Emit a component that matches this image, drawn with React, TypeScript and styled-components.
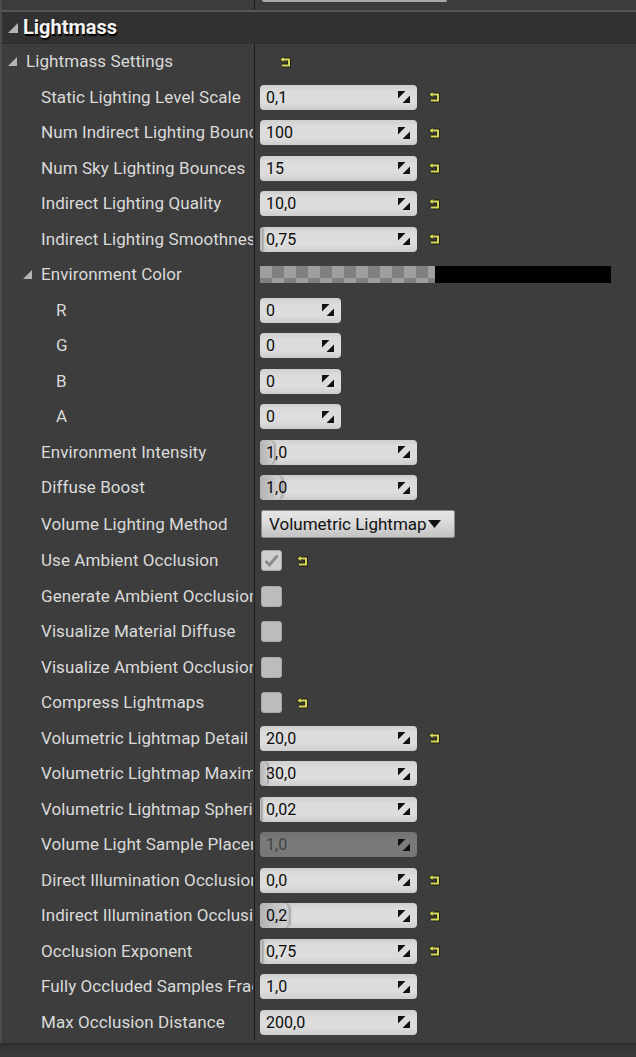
import React from 'react';
import styled, { createGlobalStyle } from 'styled-components';

const Global = createGlobalStyle`
  html, body { margin: 0; padding: 0; background: #3d3d3d; }
  body { font-family: Roboto, "Noto Sans", "Liberation Sans", sans-serif; }
  * { box-sizing: border-box; }
`;

const Panel = styled.div`
  width: 636px;
  height: 1057px;
  overflow: hidden;
  display: flex;
  flex-direction: column;
  background: #3d3d3d;
`;

const Grid = styled.div`
  display: grid;
  grid-template-columns: 252px 1px 1fr;
  border-left: 2px solid #4c4c4c;
`;

const TopStrip = styled(Grid)`
  height: 10px;
  background: #3c3c3c;
`;

const Divider = styled.div`
  background: #1b1b1b;
`;

const PrevValue = styled.div`
  padding-left: 7px;
  & > div {
    width: 185px;
    height: 2px;
    background: #a9a9a9;
    border-radius: 0 0 3px 3px;
  }
`;

const Header = styled.div`
  height: 34px;
  border-top: 2px solid #575757;
  border-bottom: 1px solid #2e2e2e;
  border-left: 2px solid #4c4c4c;
  background: #323232;
  display: flex;
  align-items: center;
  padding-left: 6px;
  gap: 5px;
`;

const HeaderTitle = styled.span`
  font-size: 20px;
  font-weight: 700;
  color: #f4f4f4;
  text-shadow: 1px 2px 1px #000;
  margin-top: -1px;
`;

const Body = styled.div`
  display: flex;
  flex-direction: column;
  padding-bottom: 3px;
  border-left: 2px solid #4c4c4c;
`;

const Row = styled.div<{ $tall?: boolean }>`
  display: grid;
  grid-template-columns: 252px 1px 1fr;
  height: ${p => (p.$tall ? '37.5px' : '35.5px')};
`;

const LabelCell = styled.div<{ $level: number }>`
  position: relative;
  display: flex;
  align-items: center;
  padding-left: ${p => p.$level * 15 + 9}px;
  padding-right: 1px;
  padding-bottom: 1px;
  min-width: 0;
  font-size: 17px;
  letter-spacing: 0.08px;
  color: #dadada;
`;

const LabelText = styled.span`
  flex: 1;
  min-width: 0;
  overflow: hidden;
  white-space: nowrap;
`;

const ExpanderSlot = styled.span`
  position: absolute;
  margin-left: -18px;
  display: flex;
  align-items: center;
`;

const ValueCell = styled.div<{ $gap: number }>`
  display: flex;
  align-items: center;
  padding-left: 5px;
  gap: ${p => p.$gap}px;
`;

const NumberBox = styled.div<{ $small?: boolean; $disabled?: boolean }>`
  position: relative;
  width: ${p => (p.$small ? '81px' : '157px')};
  height: 25px;
  border-radius: 4px;
  overflow: hidden;
  display: flex;
  align-items: center;
  justify-content: space-between;
  padding: 0 7px 0 6px;
  font-size: 16px;
  color: ${p => (p.$disabled ? '#424242' : '#0c0c0c')};
  background: ${p =>
    p.$disabled
      ? 'linear-gradient(#727272, #7b7b7b 40%, #777 100%)'
      : 'linear-gradient(#cfcfcf, #dcdcdc 25%, #dddddd 70%, #cdcdcd)'};
`;

const Fill = styled.div`
  position: absolute;
  left: 0;
  top: 0;
  bottom: 0;
  border-radius: 4px 6px 6px 4px;
  background: linear-gradient(90deg, #b4b4b4, #c4c4c4 55%, #d2d2d2 85%, #bdbdbd);
  box-shadow: inset -1px 0 0 #a3a3a3, 1px 0 2px rgba(0, 0, 0, 0.22);
`;

const ValueText = styled.span`
  position: relative;
  z-index: 1;
`;

const SpinWrap = styled.span`
  position: relative;
  z-index: 1;
  display: flex;
`;

const ColorBar = styled.div`
  display: flex;
  height: 17px;
  width: 351px;
`;

const Checker = styled.div`
  width: 175px;
  background: repeating-conic-gradient(#808080 0 25%, #9e9e9e 0 50%) 0 0 / 24px 24px;
`;

const Solid = styled.div`
  flex: 1;
  background: #000;
`;

const Combo = styled.div`
  width: 194px;
  height: 28px;
  margin-left: 1px;
  border: 1px solid #8c8c8c;
  border-radius: 2px;
  background: linear-gradient(#e6e6e6, #dadada 45%, #c3c3c3);
  display: flex;
  align-items: center;
  padding: 0 3px 0 7px;
  gap: 1px;
  font-size: 17px;
  color: #111;
  white-space: nowrap;
`;

const CheckBox = styled.div<{ $checked?: boolean }>`
  width: 21px;
  height: 21px;
  margin-left: 1px;
  border-radius: 3px;
  background: ${p => (p.$checked ? '#cfcfcf' : '#bcbcbc')};
  border: 1px solid #a9a9a9;
  display: flex;
  align-items: center;
  justify-content: center;
`;

const GroupSpacer = styled.span`
  width: 8px;
`;

const Footer = styled.div`
  flex: 1;
  background: linear-gradient(#2a2a2a, #333 3px, #393939 8px);
`;

const Expander = ({ size = 9 }: { size?: number }) => (
  <svg width={size} height={size} viewBox="0 0 9 9">
    <path d="M9 0V9H0Z" fill="#b4b4b4" />
  </svg>
);

const SpinIcon = () => (
  <svg width="12" height="12" viewBox="0 0 12 12">
    <path d="M0 0H7.5L0 7.5Z" fill="#111" />
    <path d="M12 12H4.5L12 4.5Z" fill="#111" />
  </svg>
);

const ResetIcon = () => (
  <svg width="13" height="12" viewBox="0 0 13 12">
    <path d="M4 3.5H10V9.5H3" fill="none" stroke="#20200e" strokeWidth="3.8" />
    <path d="M0 3.5L5 -0.3V7.3Z" fill="#20200e" />
    <path d="M4 3.5H10V9.5H3" fill="none" stroke="#d6d65e" strokeWidth="2" />
    <path d="M1.4 3.5L4.6 1.1V5.9Z" fill="#d6d65e" />
  </svg>
);

const CheckMark = () => (
  <svg width="15" height="13" viewBox="0 0 15 13">
    <path d="M1.5 7L5.5 11L13.5 1.5" fill="none" stroke="#8a8a8a" strokeWidth="2.8" />
  </svg>
);

type RowDef = {
  label: string;
  level: number;
  kind: 'group' | 'number' | 'color' | 'combo' | 'check';
  value?: string;
  reset?: boolean;
  fill?: number;
  small?: boolean;
  disabled?: boolean;
  expander?: boolean;
  checked?: boolean;
};

const rows: RowDef[] = [
  { label: 'Lightmass Settings', level: 1, kind: 'group', expander: true, reset: true },
  { label: 'Static Lighting Level Scale', level: 2, kind: 'number', value: '0,1', reset: true },
  { label: 'Num Indirect Lighting Bounces', level: 2, kind: 'number', value: '100', reset: true },
  { label: 'Num Sky Lighting Bounces', level: 2, kind: 'number', value: '15', reset: true },
  { label: 'Indirect Lighting Quality', level: 2, kind: 'number', value: '10,0', reset: true },
  { label: 'Indirect Lighting Smoothness', level: 2, kind: 'number', value: '0,75', reset: true, fill: 3 },
  { label: 'Environment Color', level: 2, kind: 'color', expander: true },
  { label: 'R', level: 3, kind: 'number', value: '0', small: true },
  { label: 'G', level: 3, kind: 'number', value: '0', small: true },
  { label: 'B', level: 3, kind: 'number', value: '0', small: true },
  { label: 'A', level: 3, kind: 'number', value: '0', small: true },
  { label: 'Environment Intensity', level: 2, kind: 'number', value: '1,0', fill: 15 },
  { label: 'Diffuse Boost', level: 2, kind: 'number', value: '1,0', fill: 23 },
  { label: 'Volume Lighting Method', level: 2, kind: 'combo', value: 'Volumetric Lightmap' },
  { label: 'Use Ambient Occlusion', level: 2, kind: 'check', checked: true, reset: true },
  { label: 'Generate Ambient Occlusion Material', level: 2, kind: 'check' },
  { label: 'Visualize Material Diffuse', level: 2, kind: 'check' },
  { label: 'Visualize Ambient Occlusion', level: 2, kind: 'check' },
  { label: 'Compress Lightmaps', level: 2, kind: 'check', reset: true },
  { label: 'Volumetric Lightmap Detail Cell Size', level: 2, kind: 'number', value: '20,0', reset: true },
  { label: 'Volumetric Lightmap Maximum Brick Memory Mb', level: 2, kind: 'number', value: '30,0', fill: 8 },
  { label: 'Volumetric Lightmap Spherical Harmonic Smoothing', level: 2, kind: 'number', value: '0,02', fill: 2 },
  { label: 'Volume Light Sample Placement Scale', level: 2, kind: 'number', value: '1,0', disabled: true },
  { label: 'Direct Illumination Occlusion Fraction', level: 2, kind: 'number', value: '0,0', reset: true },
  { label: 'Indirect Illumination Occlusion Fraction', level: 2, kind: 'number', value: '0,2', reset: true, fill: 30 },
  { label: 'Occlusion Exponent', level: 2, kind: 'number', value: '0,75', reset: true, fill: 3 },
  { label: 'Fully Occluded Samples Fraction', level: 2, kind: 'number', value: '1,0' },
  { label: 'Max Occlusion Distance', level: 2, kind: 'number', value: '200,0' },
];

const Control = ({ r }: { r: RowDef }) => {
  switch (r.kind) {
    case 'number':
      return (
        <NumberBox $small={r.small} $disabled={r.disabled}>
          {r.fill ? <Fill style={{ width: r.fill + 'px' }} /> : null}
          <ValueText>{r.value}</ValueText>
          <SpinWrap>
            <SpinIcon />
          </SpinWrap>
        </NumberBox>
      );
    case 'color':
      return (
        <ColorBar>
          <Checker />
          <Solid />
        </ColorBar>
      );
    case 'combo':
      return (
        <Combo>
          <span>{r.value}</span>
          <svg width="13" height="8" viewBox="0 0 13 8">
            <path d="M0 0H13L6.5 8Z" fill="#111" />
          </svg>
        </Combo>
      );
    case 'check':
      return <CheckBox $checked={r.checked}>{r.checked ? <CheckMark /> : null}</CheckBox>;
    default:
      return <GroupSpacer />;
  }
};

export default function App() {
  return (
    <Panel>
      <Global />
      <TopStrip>
        <div />
        <Divider />
        <PrevValue>
          <div />
        </PrevValue>
      </TopStrip>
      <Header>
        <Expander size={10} />
        <HeaderTitle>Lightmass</HeaderTitle>
      </Header>
      <Body>
        {rows.map(r => (
          <Row key={r.label} $tall={r.kind === 'combo'}>
            <LabelCell $level={r.level}>
              {r.expander ? (
                <ExpanderSlot>
                  <Expander />
                </ExpanderSlot>
              ) : null}
              <LabelText>{r.label}</LabelText>
            </LabelCell>
            <Divider />
            <ValueCell $gap={r.kind === 'check' ? 14 : 11}>
              <Control r={r} />
              {r.reset ? <ResetIcon /> : null}
            </ValueCell>
          </Row>
        ))}
      </Body>
      <Footer />
    </Panel>
  );
}
